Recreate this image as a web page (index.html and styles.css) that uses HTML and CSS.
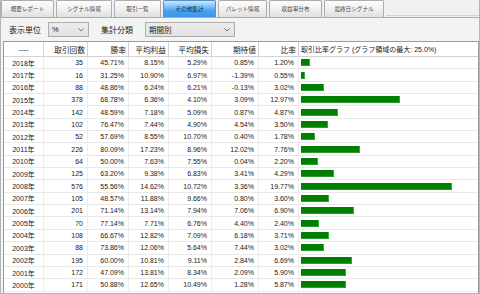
FILE: index.html
```html
<!DOCTYPE html>
<html lang="ja">
<head>
<meta charset="utf-8">
<title>その他集計</title>
<link rel="stylesheet" href="styles.css">
</head>
<body>
<div class="app">
  <div class="tabs">
    <div class="tab w53">概要レポート</div>
    <div class="tab w56">シグナル情報</div>
    <div class="tab w47">取引一覧</div>
    <div class="tab w53 active">その他集計</div>
    <div class="tab w49">パレット情報</div>
    <div class="tab w53">収益率分布</div>
    <div class="tab w60">最終日シグナル</div>
    <div class="filler"></div>
  </div>
  <div class="panel">
    <div class="controls">
      <span class="lbl">表示単位</span>
      <div class="select s1"><span>%</span><svg class="chev" viewBox="0 0 6 4" width="6" height="4"><path d="M0.5 0.5 L3 3 L5.5 0.5" fill="none" stroke="#555" stroke-width="0.8"/></svg></div>
      <span class="lbl l2">集計分類</span>
      <div class="select s2"><span>期間別</span><svg class="chev" viewBox="0 0 6 4" width="6" height="4"><path d="M0.5 0.5 L3 3 L5.5 0.5" fill="none" stroke="#555" stroke-width="0.8"/></svg></div>
    </div>
    <div class="grid">
      <div class="row head">
        <div class="cell c">----</div>
        <div class="cell">取引回数</div>
        <div class="cell">勝率</div>
        <div class="cell">平均利益</div>
        <div class="cell">平均損失</div>
        <div class="cell">期待値</div>
        <div class="cell">比率</div>
        <div class="cell g">取引比率グラフ (グラフ領域の最大: 25.0%)</div>
      </div>
      <div class="row"><div class="cell c">2018年</div><div class="cell">35</div><div class="cell">45.71%</div><div class="cell">8.15%</div><div class="cell">5.29%</div><div class="cell">0.85%</div><div class="cell">1.20%</div><div class="cell g"><span class="bar" style="width:9.2px"></span></div></div>
      <div class="row"><div class="cell c">2017年</div><div class="cell">16</div><div class="cell">31.25%</div><div class="cell">10.90%</div><div class="cell">6.97%</div><div class="cell">-1.39%</div><div class="cell">0.55%</div><div class="cell g"><span class="bar" style="width:4.2px"></span></div></div>
      <div class="row"><div class="cell c">2016年</div><div class="cell">88</div><div class="cell">48.86%</div><div class="cell">6.24%</div><div class="cell">6.21%</div><div class="cell">-0.13%</div><div class="cell">3.02%</div><div class="cell g"><span class="bar" style="width:23.1px"></span></div></div>
      <div class="row"><div class="cell c">2015年</div><div class="cell">378</div><div class="cell">68.78%</div><div class="cell">6.36%</div><div class="cell">4.10%</div><div class="cell">3.09%</div><div class="cell">12.97%</div><div class="cell g"><span class="bar" style="width:99.2px"></span></div></div>
      <div class="row"><div class="cell c">2014年</div><div class="cell">142</div><div class="cell">48.59%</div><div class="cell">7.18%</div><div class="cell">5.09%</div><div class="cell">0.87%</div><div class="cell">4.87%</div><div class="cell g"><span class="bar" style="width:37.3px"></span></div></div>
      <div class="row"><div class="cell c">2013年</div><div class="cell">102</div><div class="cell">76.47%</div><div class="cell">7.44%</div><div class="cell">4.90%</div><div class="cell">4.54%</div><div class="cell">3.50%</div><div class="cell g"><span class="bar" style="width:26.8px"></span></div></div>
      <div class="row"><div class="cell c">2012年</div><div class="cell">52</div><div class="cell">57.69%</div><div class="cell">8.55%</div><div class="cell">10.70%</div><div class="cell">0.40%</div><div class="cell">1.78%</div><div class="cell g"><span class="bar" style="width:13.6px"></span></div></div>
      <div class="row"><div class="cell c">2011年</div><div class="cell">226</div><div class="cell">80.09%</div><div class="cell">17.23%</div><div class="cell">8.96%</div><div class="cell">12.02%</div><div class="cell">7.76%</div><div class="cell g"><span class="bar" style="width:59.4px"></span></div></div>
      <div class="row"><div class="cell c">2010年</div><div class="cell">64</div><div class="cell">50.00%</div><div class="cell">7.63%</div><div class="cell">7.55%</div><div class="cell">0.04%</div><div class="cell">2.20%</div><div class="cell g"><span class="bar" style="width:16.8px"></span></div></div>
      <div class="row"><div class="cell c">2009年</div><div class="cell">125</div><div class="cell">63.20%</div><div class="cell">9.38%</div><div class="cell">6.83%</div><div class="cell">3.41%</div><div class="cell">4.29%</div><div class="cell g"><span class="bar" style="width:32.8px"></span></div></div>
      <div class="row"><div class="cell c">2008年</div><div class="cell">576</div><div class="cell">55.56%</div><div class="cell">14.62%</div><div class="cell">10.72%</div><div class="cell">3.36%</div><div class="cell">19.77%</div><div class="cell g"><span class="bar" style="width:151.2px"></span></div></div>
      <div class="row"><div class="cell c">2007年</div><div class="cell">105</div><div class="cell">48.57%</div><div class="cell">11.88%</div><div class="cell">9.66%</div><div class="cell">0.80%</div><div class="cell">3.60%</div><div class="cell g"><span class="bar" style="width:27.5px"></span></div></div>
      <div class="row"><div class="cell c">2006年</div><div class="cell">201</div><div class="cell">71.14%</div><div class="cell">13.14%</div><div class="cell">7.94%</div><div class="cell">7.06%</div><div class="cell">6.90%</div><div class="cell g"><span class="bar" style="width:52.8px"></span></div></div>
      <div class="row"><div class="cell c">2005年</div><div class="cell">70</div><div class="cell">77.14%</div><div class="cell">7.71%</div><div class="cell">6.76%</div><div class="cell">4.40%</div><div class="cell">2.40%</div><div class="cell g"><span class="bar" style="width:18.4px"></span></div></div>
      <div class="row"><div class="cell c">2004年</div><div class="cell">108</div><div class="cell">66.67%</div><div class="cell">12.82%</div><div class="cell">7.09%</div><div class="cell">6.18%</div><div class="cell">3.71%</div><div class="cell g"><span class="bar" style="width:28.4px"></span></div></div>
      <div class="row"><div class="cell c">2003年</div><div class="cell">88</div><div class="cell">73.86%</div><div class="cell">12.06%</div><div class="cell">5.64%</div><div class="cell">7.44%</div><div class="cell">3.02%</div><div class="cell g"><span class="bar" style="width:23.1px"></span></div></div>
      <div class="row"><div class="cell c">2002年</div><div class="cell">195</div><div class="cell">60.00%</div><div class="cell">10.81%</div><div class="cell">9.11%</div><div class="cell">2.84%</div><div class="cell">6.69%</div><div class="cell g"><span class="bar" style="width:51.2px"></span></div></div>
      <div class="row"><div class="cell c">2001年</div><div class="cell">172</div><div class="cell">47.09%</div><div class="cell">13.81%</div><div class="cell">8.34%</div><div class="cell">2.09%</div><div class="cell">5.90%</div><div class="cell g"><span class="bar" style="width:45.1px"></span></div></div>
      <div class="row"><div class="cell c">2000年</div><div class="cell">171</div><div class="cell">50.88%</div><div class="cell">12.65%</div><div class="cell">10.49%</div><div class="cell">1.28%</div><div class="cell">5.87%</div><div class="cell g"><span class="bar" style="width:44.9px"></span></div></div>
    </div>
  </div>
</div>
</body>
</html>
```
FILE: styles.css
```css
html, body {
  margin: 0;
  padding: 0;
}
body {
  background: #f0f0f0;
}
.app {
  width: 480px;
  height: 294px;
  box-sizing: border-box;
  border-left: 1px solid #b4b4b4;
  border-right: 1px solid #b4b4b4;
  border-bottom: 1px solid #b4b4b4;
  background: #f0f0f0;
  overflow: hidden;
  font-family: "Liberation Sans", "Noto Sans CJK JP", sans-serif;
  color: #1a1a1a;
}
.tabs {
  display: flex;
  gap: 2px;
  height: 17px;
}
.tab {
  box-sizing: border-box;
  height: 17px;
  border: 1px solid #acacac;
  border-bottom: none;
  border-radius: 2px 2px 0 0;
  background: linear-gradient(#fdfdfd, #f1f1f1 50%, #e0e0e0);
  font-size: 5.6px;
  color: #4a4a4a;
  display: flex;
  align-items: center;
  justify-content: center;
  white-space: nowrap;
  flex: none;
}
.tab.active {
  background: linear-gradient(#c8e6ff, #74bdf7 40%, #4aa2ee 60%, #3c96e8);
  border-color: #5b8fc4;
  color: #0b1a30;
}
.w47 { width: 47px; }
.w49 { width: 49px; }
.w53 { width: 53px; }
.w56 { width: 56px; }
.w60 { width: 60px; }
.filler {
  flex: 1;
  height: 15px;
  border-bottom: 1px solid #d2d2d2;
}
.panel {
  border-top: 1px solid #acacac;
  padding: 4px 0 0 2px;
  background: #f3f3f3;
  height: 276px;
}
.controls {
  display: flex;
  align-items: center;
  height: 15px;
  font-size: 8px;
}
.lbl {
  margin-left: 6px;
  width: 32px;
  white-space: nowrap;
}
.lbl.l2 {
  margin-left: 12px;
}
.select {
  box-sizing: border-box;
  height: 15px;
  border: 1px solid #adadad;
  background: linear-gradient(#ececec, #e2e2e2);
  display: flex;
  align-items: center;
  justify-content: space-between;
  padding: 0 4px 0 3px;
  font-size: 7.5px;
}
.s1 {
  margin-left: 7px;
  width: 41px;
}
.s2 {
  margin-left: 12px;
  width: 90px;
}
.chev {
  display: block;
}
.grid {
  margin-top: 4px;
  width: 476px;
  box-sizing: border-box;
  border: 1px solid #9c9c9c;
  background: #ffffff;
  height: 260px;
  overflow: hidden;
}
.row {
  display: grid;
  grid-template-columns: 40px 44px 41px 40px 43px 47px 40px 179px;
  height: 12.35px;
  font-size: 7px;
}
.cell {
  box-sizing: border-box;
  border-right: 1px solid #ededed;
  border-bottom: 1px solid #e9e9e9;
  display: flex;
  align-items: center;
  justify-content: flex-end;
  padding-right: 4px;
  white-space: nowrap;
  overflow: hidden;
}
.cell.c {
  justify-content: center;
  padding-right: 0;
}
.cell.g {
  justify-content: flex-start;
  padding: 0 0 0 2px;
  border-right: none;
}
.row.head {
  height: 15px;
  font-size: 7.7px;
}
.row.head .cell {
  border-right: 1px solid #d3d3d3;
  border-bottom: 1px solid #d3d3d3;
  padding-right: 2px;
}
.row.head .cell.c {
  padding-right: 0;
}
.row.head .cell.g {
  border-right: none;
  font-size: 7px;
  padding-left: 2px;
}
.bar {
  display: block;
  height: 7px;
  box-sizing: border-box;
  background: #008000;
  border-right: 1px solid #3da33d;
  border-bottom: 1px solid #2f9a2f;
}
```
